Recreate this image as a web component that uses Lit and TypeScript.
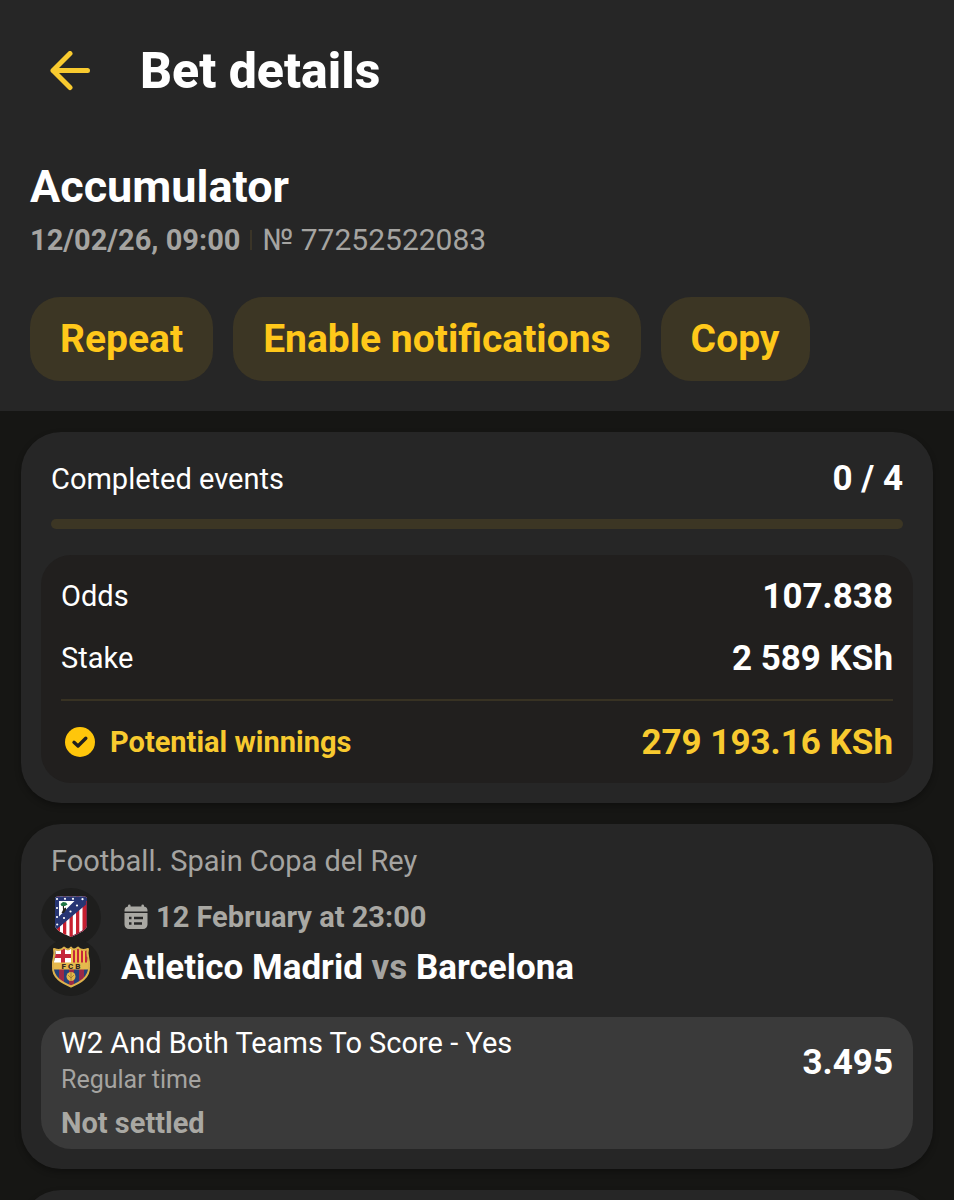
import { LitElement, html, css, svg } from "lit";
import { customElement, property } from "lit/decorators.js";

const backIcon = html`<svg viewBox="0 0 40 40" width="40" height="40" fill="none" stroke="currentColor" stroke-width="5" stroke-linecap="round" stroke-linejoin="round" aria-hidden="true">
  <path d="M37.500 19.500H3M20 2.500L3 19.500L20 36.500"></path>
</svg>`;

const checkIcon = html`<svg viewBox="0 0 30 30" width="30" height="30" aria-hidden="true">
  <circle cx="15" cy="15" r="15" fill="#ffc60b"></circle>
  <path d="M9 15.300L13 19L20.800 11.200" fill="none" stroke="#211f1e" stroke-width="3.400" stroke-linecap="round" stroke-linejoin="round"></path>
</svg>`;

const calendarIcon = html`<svg viewBox="0 0 24 26" width="24" height="26" fill="#a9a8a3" aria-hidden="true">
  <path d="M0.500 7.500V6.500A4 4 0 0 1 4 2.500V1.800a1.300 1.300 0 0 1 2.600 0V2.500H17.400V1.800a1.300 1.300 0 0 1 2.600 0V2.500A4 4 0 0 1 23.500 6.500V7.500Z"></path>
  <path fill-rule="evenodd" d="M0.500 9H23.500V20.500a4.500 4.500 0 0 1-4.500 4.500H5A4.500 4.500 0 0 1 0.500 20.500ZM5 12.800V15.200H7.500V12.800ZM10 12.800V15.200H19V12.800ZM5 18.300V20.700H7.500V18.300ZM10 18.300V20.700H18V18.300Z"></path>
</svg>`;

const stars = [[3, 3], [3, 12], [3, 21], [3.200, 28.500], [11, 2.800], [19, 2.800], [28.500, 3.200], [23, 9.500], [16.500, 15.500], [10, 22]];

const atleticoCrest = html`<svg viewBox="0 0 34 42" width="34" height="42" aria-hidden="true">
  <defs><clipPath id="atm"><path d="M1 2L3 0.500H31L33 2V29C33 34 26 37 17 41C8 37 1 34 1 29Z"></path></clipPath></defs>
  <g clip-path="url(#atm)">
    <rect width="34" height="42" fill="#fff"></rect>
    <path fill="#c8202f" d="M3 0h3v42H3zM9 0h3.300v42H9zM15.500 0h3.300v42h-3.300zM22 0h3.300v42H22zM28.500 0h4.500v42h-4.500z"></path>
    <path fill="#273573" d="M0 0H34V7L3 33H0Z"></path>
    <path fill="#fff" d="M5 5H20.500L5 20.500Z"></path>
    <path fill="#1e7543" d="M6.500 8L9 6L12 6.500L13.500 8.500L11 10H7.500Z"></path>
    <path fill="#25231f" d="M8.800 10H10V12.500L12 11.500V14L10 17H7.500L9 14Z"></path>
    ${stars.map(([x, y]) => svg`<circle cx=${x} cy=${y} r="1.100" fill="#fff"></circle>`)}
    <path fill="none" stroke="#8c2545" stroke-width="1.200" d="M32.500 5V29C32.500 34 26 37 17 40.700"></path>
  </g>
</svg>`;

const barcelonaCrest = html`<svg viewBox="0 0 40 42" width="40" height="42" aria-hidden="true">
  <defs><clipPath id="fcb"><path d="M4 4C8 5 11 4 13 2C16 4 18 4 20 2C22 4 24 4 27 2C29 4 32 5 36 4C34 10 38 13 37 20C38 32 28 37 20 40C12 37 2 32 3 20C2 13 6 10 4 4Z"></path></clipPath></defs>
  <g clip-path="url(#fcb)">
    <rect width="40" height="42" fill="#25417a"></rect>
    <path fill="#fff" d="M0 0H20V18H0Z"></path>
    <path fill="#c5263b" d="M10 0H14V18H10ZM0 8H20V12H0Z"></path>
    <path fill="#f1c34c" d="M20 0H40V18H20Z"></path>
    <path fill="#c5263b" d="M22 0h2v18h-2zM26 0h2v18h-2zM30 0h2v18h-2zM34 0h2v18h-2z"></path>
    <path fill="#992947" d="M8 23h5v19H8zM18 23h5v19h-5zM28 23h5v19h-5z"></path>
    <rect y="16.500" width="40" height="7" fill="#e5b94d"></rect>
    <circle cx="20" cy="30.500" r="4.500" fill="#e4b849"></circle>
    <path d="M17 29L20 32L23 29M20 26V35" fill="none" stroke="#977432" stroke-width="0.800"></path>
  </g>
  <text x="20" y="22.800" text-anchor="middle" font-family="Roboto, sans-serif" font-size="8" font-weight="900" fill="#342925">F C B</text>
  <path fill="none" stroke="#ddb24c" stroke-width="2" stroke-linejoin="round" d="M3 3C8 5 11 4 13 1.500C16 4 18 4 20 1.500C22 4 24 4 27 1.500C29 4 32 5 37 3C35 10 39 13 38 20C39 32 28 37 20 40.500C12 37 1 32 2 20C1 13 5 10 3 3Z"></path>
</svg>`;

@customElement("bet-summary")
export class BetSummary extends LitElement {
  @property({ type: Number }) completed = 0;
  @property({ type: Number }) total = 4;

  static styles = css`
    :host { display: block; padding: 27px 20px 20px; }
    .head { display: flex; justify-content: space-between; align-items: center; padding: 0 10px; font-size: 29px; line-height: 40px; }
    .count, .value { font-size: 35px; font-weight: 700; }
    .track { height: 10px; margin: 20px 10px 26px; border-radius: 5px; background: #3c3624; overflow: hidden; }
    .fill { height: 100%; background: #ffc60b; }
    .totals { margin: 0; padding: 10px 20px 0; border-radius: 30px; background: #211f1e; }
    .row { display: flex; justify-content: space-between; align-items: center; min-height: 62px; font-size: 29px; }
    .row dd { margin: 0; }
    .winnings { min-height: 82px; margin-top: 10px; border-top: 2px solid #383223; color: #f8ca2f; }
    .label { display: flex; align-items: center; gap: 15px; padding-left: 4px; font-weight: 700; }
  `;

  render() {
    const share = (this.completed / this.total) * 100;
    return html`
      <div class="head"><span>Completed events</span><span class="count">${this.completed} / ${this.total}</span></div>
      <div class="track" role="progressbar" aria-label="Completed events" aria-valuenow=${this.completed} aria-valuemax=${this.total}>
        <div class="fill" style="width:${share}%"></div>
      </div>
      <dl class="totals">
        <div class="row"><dt>Odds</dt><dd class="value">107.838</dd></div>
        <div class="row"><dt>Stake</dt><dd class="value">2 589 KSh</dd></div>
        <div class="row winnings"><dt class="label">${checkIcon}Potential winnings</dt><dd class="value">279 193.16 KSh</dd></div>
      </dl>`;
  }
}

@customElement("bet-event")
export class BetEvent extends LitElement {
  static styles = css`
    :host { display: block; padding: 19px 20px 20px; }
    .league { padding: 0 10px; color: #a5a4a1; font-size: 29px; line-height: 36px; }
    .match { display: flex; gap: 20px; margin-top: 9px; }
    .crests { display: flex; flex-direction: column; }
    .crest { display: grid; place-items: center; width: 60px; height: 58px; border-radius: 50%; background: #1e1e1d; }
    .crest + .crest { margin-top: -8px; }
    .info { min-width: 0; }
    .date { display: flex; align-items: center; gap: 8px; padding-left: 3px; color: #a9a8a3; font-size: 29px; font-weight: 700; line-height: 58px; }
    .teams { margin: 0; font-size: 35px; font-weight: 700; line-height: 44px; }
    .vs { color: #a5a4a1; }
    .bet { margin-top: 21px; padding: 8px 20px; border-radius: 30px; background: #3a3a3a; }
    .pick { display: flex; justify-content: space-between; align-items: center; }
    .market { font-size: 29px; line-height: 36px; }
    .period { color: #a5a4a1; font-size: 25px; line-height: 38px; }
    .odds { font-size: 35px; font-weight: 700; }
    .status { margin-top: 6px; color: #a9a8a3; font-size: 29px; font-weight: 700; line-height: 36px; }
  `;

  render() {
    return html`
      <div class="league">Football. Spain Copa del Rey</div>
      <div class="match">
        <div class="crests"><span class="crest">${atleticoCrest}</span><span class="crest">${barcelonaCrest}</span></div>
        <div class="info">
          <div class="date">${calendarIcon}<time datetime="2026-02-12T23:00">12 February at 23:00</time></div>
          <h3 class="teams">Atletico Madrid <span class="vs">vs</span> Barcelona</h3>
        </div>
      </div>
      <div class="bet">
        <div class="pick">
          <div>
            <div class="market">W2 And Both Teams To Score - Yes</div>
            <div class="period">Regular time</div>
          </div>
          <span class="odds">3.495</span>
        </div>
        <div class="status">Not settled</div>
      </div>`;
  }
}

@customElement("app-root")
export class AppRoot extends LitElement {
  static styles = css`
    :host { display: block; height: 100vh; overflow: hidden; background: #161614; color: #fff; font-family: Roboto, sans-serif; }
    button { border: 0; margin: 0; font: inherit; cursor: pointer; }
    .header { padding-bottom: 30px; background: #262626; }
    .bar { display: flex; align-items: center; gap: 40px; height: 142px; padding: 0 40px; }
    .back { display: grid; place-items: center; width: 60px; height: 60px; padding: 0; background: none; color: #f8ca2f; }
    .title { margin: 0; font-size: 50px; font-weight: 800; line-height: 60px; }
    .heading { padding: 19px 30px 0; }
    .kind { margin: 0; font-size: 45px; font-weight: 700; line-height: 52px; }
    .meta { display: flex; align-items: center; gap: 10px; margin-top: 9px; color: #a5a4a1; font-size: 30px; line-height: 36px; }
    .when { font-size: 29px; font-weight: 700; }
    .sep { width: 2px; height: 20px; background: #3a3427; }
    .actions { display: flex; flex-wrap: wrap; gap: 20px; padding: 39px 30px 0; }
    .action { height: 84px; padding: 0 30px; border-radius: 30px; background: #3c3624; color: #ffc81a; font-size: 39px; font-weight: 700; }
    .list { display: grid; gap: 21px; padding: 21px; }
    .card { border-radius: 40px; background: #262626; box-shadow: 0 3px 6px rgba(0, 0, 0, 0.3); }
    .next { min-height: 120px; }
  `;

  render() {
    return html`
      <header class="header">
        <div class="bar">
          <button class="back" aria-label="Back">${backIcon}</button>
          <h1 class="title">Bet details</h1>
        </div>
        <div class="heading">
          <h2 class="kind">Accumulator</h2>
          <div class="meta"><span class="when">12/02/26, 09:00</span><span class="sep"></span><span>№ 77252522083</span></div>
        </div>
        <div class="actions">
          ${["Repeat", "Enable notifications", "Copy"].map((label) => html`<button class="action">${label}</button>`)}
        </div>
      </header>
      <main class="list">
        <bet-summary class="card"></bet-summary>
        <bet-event class="card"></bet-event>
        <div class="card next"></div>
      </main>`;
  }
}
